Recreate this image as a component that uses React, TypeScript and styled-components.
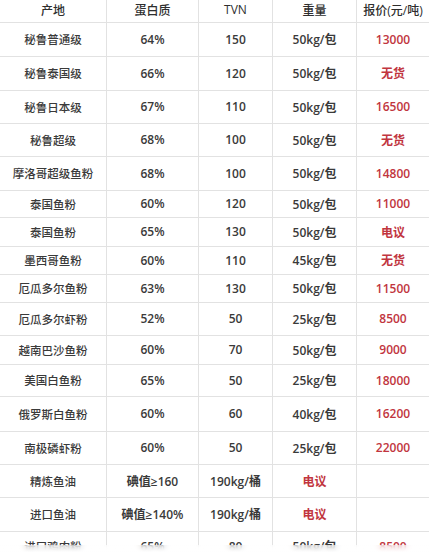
import React from "react";
import styled, { createGlobalStyle } from "styled-components";

const Global = createGlobalStyle`
  html, body { margin: 0; padding: 0; background: #ffffff; }
  body { font-family: "Open Sans", "Noto Sans CJK SC", sans-serif; }
`;

const Page = styled.div`
  position: relative;
  width: 429px;
  height: 560px;
  overflow: hidden;
  background: #fff;
`;

const Grid = styled.div`
  display: grid;
  grid-template-columns: 107px 92px 74px 84px 72px;
`;

const Cell = styled.div<{ $h: number; $red?: boolean; $head?: boolean; $last?: boolean; $name?: boolean }>`
  height: ${(p) => p.$h}px;
  box-sizing: border-box;
  display: flex;
  align-items: center;
  justify-content: center;
  border-bottom: 1px solid #e2e2e2;
  border-right: ${(p) => (p.$last ? "none" : "1px solid #e2e2e2")};
  font-size: ${(p) => (p.$name ? 11.5 : 12)}px;
  font-weight: ${(p) => (p.$head ? 500 : p.$name ? 500 : 600)};
  color: ${(p) => (p.$red ? "#c1353e" : p.$head ? "#2e2e2e" : "#3a3a3a")};
  white-space: nowrap;
  padding-bottom: ${(p) => (p.$head ? 3 : 1)}px;
`;

const Fade = styled.div`
  position: absolute;
  left: 0;
  right: 0;
  bottom: 0;
  height: 15px;
  background: linear-gradient(to bottom, rgba(255,255,255,0.55), #fff 50%);
  backdrop-filter: blur(3px);
`;

type RowData = { h: number; c: string[]; red: boolean[] };

const headers = ["产地", "蛋白质", "TVN", "重量", "报价(元/吨)"];

const R = [false, false, false, false, true];
const W = [false, false, false, true, false];

const rows: RowData[] = [
  { h: 34, c: ["秘鲁普通级", "64%", "150", "50kg/包", "13000"], red: R },
  { h: 34, c: ["秘鲁泰国级", "66%", "120", "50kg/包", "无货"], red: R },
  { h: 33, c: ["秘鲁日本级", "67%", "110", "50kg/包", "16500"], red: R },
  { h: 33, c: ["秘鲁超级", "68%", "100", "50kg/包", "无货"], red: R },
  { h: 34, c: ["摩洛哥超级鱼粉", "68%", "100", "50kg/包", "14800"], red: R },
  { h: 27, c: ["泰国鱼粉", "60%", "120", "50kg/包", "11000"], red: R },
  { h: 29, c: ["泰国鱼粉", "65%", "130", "50kg/包", "电议"], red: R },
  { h: 28, c: ["墨西哥鱼粉", "60%", "110", "45kg/包", "无货"], red: R },
  { h: 28, c: ["厄瓜多尔鱼粉", "63%", "130", "50kg/包", "11500"], red: R },
  { h: 33, c: ["厄瓜多尔虾粉", "52%", "50", "25kg/包", "8500"], red: R },
  { h: 29, c: ["越南巴沙鱼粉", "60%", "70", "50kg/包", "9000"], red: R },
  { h: 32, c: ["美国白鱼粉", "65%", "50", "25kg/包", "18000"], red: R },
  { h: 35, c: ["俄罗斯白鱼粉", "60%", "60", "40kg/包", "16200"], red: R },
  { h: 33, c: ["南极磷虾粉", "60%", "50", "25kg/包", "22000"], red: R },
  { h: 33, c: ["精炼鱼油", "碘值≥160", "190kg/桶", "电议", ""], red: W },
  { h: 34, c: ["进口鱼油", "碘值≥140%", "190kg/桶", "电议", ""], red: W },
  { h: 30, c: ["进口鸡肉粉", "65%", "80", "50kg/包", "8500"], red: R },
];

export default function App() {
  return (
    <Page>
      <Global />
      <Grid>
        {headers.map((t, i) => (
          <Cell key={"h" + i} $h={23} $head $last={i === 4}>
            {t}
          </Cell>
        ))}
        {rows.map((r, ri) =>
          r.c.map((t, ci) => (
            <Cell key={ri + "-" + ci} $h={r.h} $red={r.red[ci]} $last={ci === 4} $name={ci === 0}>
              {t}
            </Cell>
          ))
        )}
      </Grid>
      <Fade />
    </Page>
  );
}
